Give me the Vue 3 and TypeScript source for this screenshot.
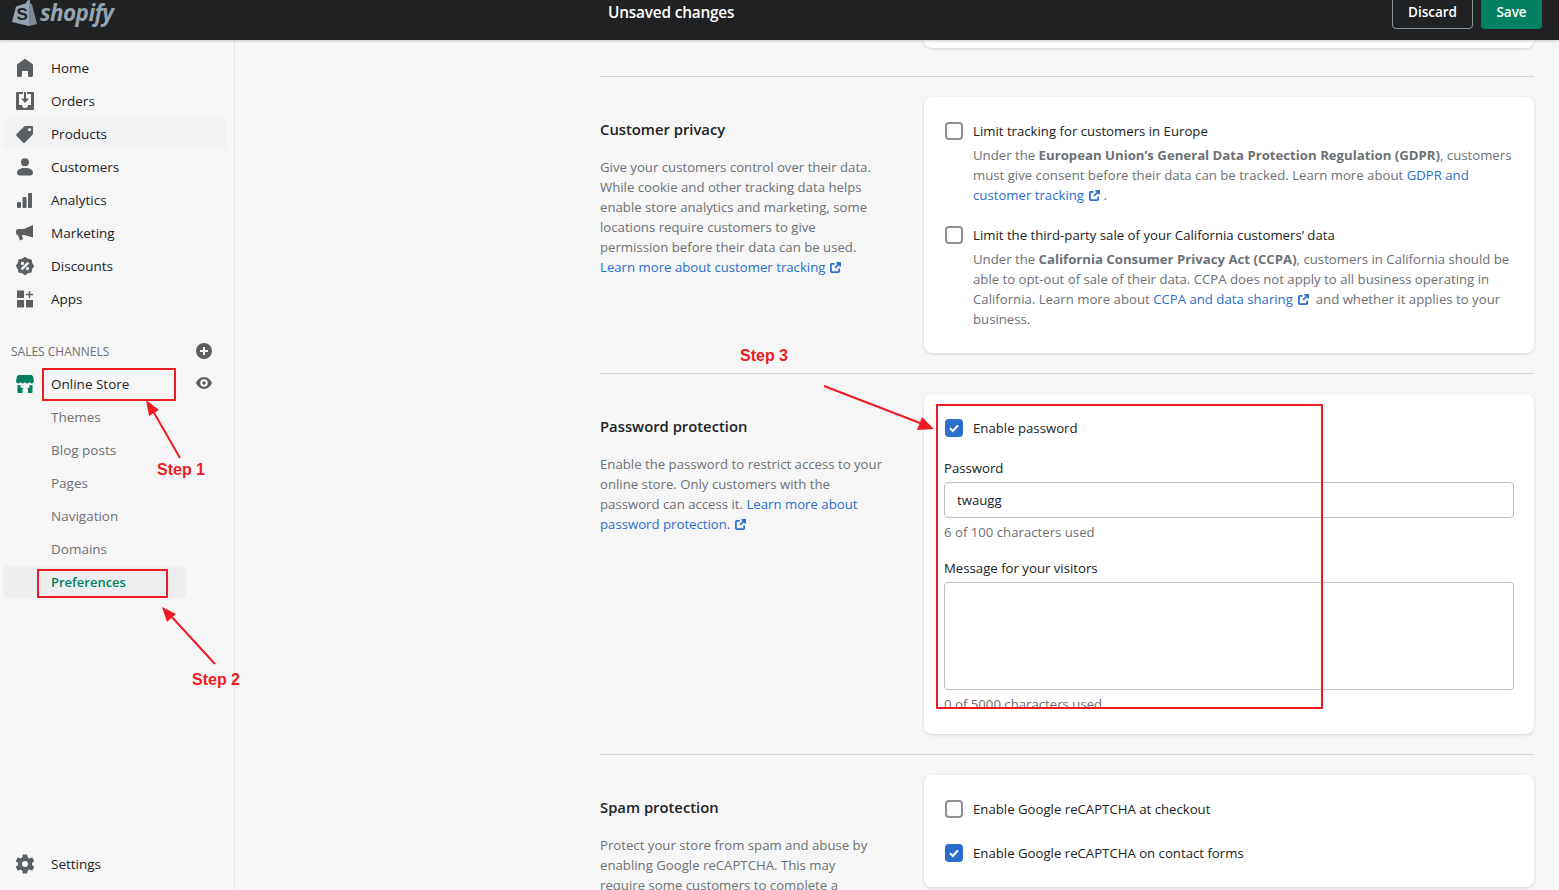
<template>
  <div class="page">
    <header class="topbar">
      <div class="logo">
        <svg class="bag" width="26" height="28" viewBox="0 0 26 28">
          <path d="M1 23 5 7.500 15 4.200C16 1.500 17.500.5 19 1L18 27Z" fill="#95a4b0" />
          <path d="M18.600 3.500 21 5.500 26 25 18 27Z" fill="#7c8b97" />
          <text x="5.500" y="21" class="bag-s">S</text>
        </svg>
        <span class="wordmark">shopify</span>
      </div>
      <span class="unsaved">Unsaved changes</span>
      <div class="actions">
        <button class="btn discard">Discard</button>
        <button class="btn save">Save</button>
      </div>
    </header>

    <div class="body">
      <aside class="sidebar">
        <a v-for="item in mainNav" :key="item.label" class="nav-item" :class="{ hovered: item.label === 'Products' }">
          <svg class="nav-icon" width="20" height="20" viewBox="0 0 20 20">
            <path :d="item.d" fill-rule="evenodd" />
          </svg>
          {{ item.label }}
        </a>

        <div class="channels">
          <span>SALES CHANNELS</span>
          <svg class="add" width="16" height="16" viewBox="0 0 16 16">
            <path d="M8 0a8 8 0 1 1 0 16A8 8 0 0 1 8 0ZM7 4v3H4v2h3v3h2V9h3V7H9V4Z" fill="#5c5f62" fill-rule="evenodd" />
          </svg>
        </div>

        <a class="nav-item store">
          <svg class="nav-icon" width="20" height="20" viewBox="0 0 20 20">
            <path d="M4 1h12a2 2 0 0 1 2 1.600L19 7a2.400 2.400 0 0 1-2.300 2.400A2.500 2.500 0 0 1 14.500 8 2.500 2.500 0 0 1 10 8 2.500 2.500 0 0 1 5.500 8 2.500 2.500 0 0 1 3.300 9.400 2.400 2.400 0 0 1 1 7l1-4.400A2 2 0 0 1 4 1ZM2.500 11c1.200.3 2.200.2 3-.2V13a1 1 0 0 0 1 1h7a1 1 0 0 0 1-1v-2.200c.8.400 1.800.5 3 .2v7a1 1 0 0 1-1 1h-3.500v-3.500a1.500 1.500 0 0 0-1.500-1.500H9a1.500 1.500 0 0 0-1.500 1.500V19H3.500a1 1 0 0 1-1-1Z" fill="#008060" />
          </svg>
          Online Store
          <svg class="eye" width="16" height="12" viewBox="0 0 16 12">
            <path d="M8 0c4 0 7 3.300 8 6-1 2.700-4 6-8 6S1 8.700 0 6c1-2.700 4-6 8-6Zm0 2.200a3.800 3.800 0 1 0 0 7.600 3.800 3.800 0 0 0 0-7.600ZM8 4.200a1.800 1.800 0 1 1 0 3.600 1.800 1.800 0 0 1 0-3.600Z" fill="#5c5f62" fill-rule="evenodd" />
          </svg>
        </a>
        <a v-for="sub in subNav" :key="sub" class="nav-item sub">{{ sub }}</a>
        <a class="nav-item sub selected">Preferences</a>

        <a class="nav-item settings">
          <svg class="nav-icon" width="20" height="20" viewBox="0 0 20 20">
            <path :d="gearPath" fill-rule="evenodd" />
          </svg>
          Settings
        </a>
      </aside>

      <main class="main">
        <div class="stub-card"></div>

        <section class="section">
          <div class="intro">
            <h2>Customer privacy</h2>
            <p>
              Give your customers control over their data.<br />
              While cookie and other tracking data helps<br />
              enable store analytics and marketing, some<br />
              locations require customers to give<br />
              permission before their data can be used.<br />
              <a class="link">Learn more about customer tracking<svg class="ext" width="11" height="11" viewBox="0 0 12 12"><path :d="extPath" /></svg></a>
            </p>
          </div>
          <div class="card">
            <div class="check-row">
              <span class="checkbox"></span>
              <span>Limit tracking for customers in Europe</span>
            </div>
            <p class="check-desc">
              Under the <b>European Union’s General Data Protection Regulation (GDPR)</b>, customers<br />
              must give consent before their data can be tracked. Learn more about <a class="link">GDPR and<br />customer tracking<svg class="ext" width="11" height="11" viewBox="0 0 12 12"><path :d="extPath" /></svg></a> .
            </p>
            <div class="check-row spaced">
              <span class="checkbox"></span>
              <span>Limit the third-party sale of your California customers’ data</span>
            </div>
            <p class="check-desc">
              Under the <b>California Consumer Privacy Act (CCPA)</b>, customers in California should be<br />
              able to opt-out of sale of their data. CCPA does not apply to all business operating in<br />
              California. Learn more about <a class="link">CCPA and data sharing<svg class="ext" width="11" height="11" viewBox="0 0 12 12"><path :d="extPath" /></svg></a>&nbsp; and whether it applies to your<br />
              business.
            </p>
          </div>
        </section>

        <section class="section">
          <div class="intro">
            <h2>Password protection</h2>
            <p>
              Enable the password to restrict access to your<br />
              online store. Only customers with the<br />
              password can access it. <a class="link">Learn more about<br />password protection.<svg class="ext" width="11" height="11" viewBox="0 0 12 12"><path :d="extPath" /></svg></a>
            </p>
          </div>
          <div class="card password-card">
            <div class="check-row">
              <span class="checkbox checked"><svg width="18" height="18" viewBox="0 0 18 18"><path d="M5 9.300 7.800 12 13 6.300" /></svg></span>
              <span>Enable password</span>
            </div>
            <label class="field-label first">Password</label>
            <input class="field" type="text" value="twaugg" readonly />
            <div class="help">6 of 100 characters used</div>
            <label class="field-label second">Message for your visitors</label>
            <textarea class="field area" readonly></textarea>
            <div class="help">0 of 5000 characters used</div>
          </div>
        </section>

        <section class="section">
          <div class="intro">
            <h2>Spam protection</h2>
            <p>
              Protect your store from spam and abuse by<br />
              enabling Google reCAPTCHA. This may<br />
              require some customers to complete a
            </p>
          </div>
          <div class="card">
            <div class="check-row">
              <span class="checkbox"></span>
              <span>Enable Google reCAPTCHA at checkout</span>
            </div>
            <div class="check-row wide">
              <span class="checkbox checked"><svg width="18" height="18" viewBox="0 0 18 18"><path d="M5 9.300 7.800 12 13 6.300" /></svg></span>
              <span>Enable Google reCAPTCHA on contact forms</span>
            </div>
          </div>
        </section>
      </main>
    </div>

    <svg class="annotations" width="1559" height="890" viewBox="0 0 1559 890">
      <g fill="none" stroke="#ed1c24" stroke-width="2">
        <rect x="43" y="369" width="132" height="31" />
        <rect x="38" y="570" width="129" height="27" />
        <rect x="937" y="405" width="385" height="303" />
        <path d="M180 458 153 411M215 664 170 615M824 386 920 423" />
      </g>
      <g fill="#ed1c24">
        <path d="M146 400 159 410 149 416Z" />
        <path d="M162 607 176 614 167 622Z" />
        <path d="M934 429 917 430 922 417Z" />
      </g>
      <g class="step">
        <text x="157" y="475">Step 1</text>
        <text x="192" y="685">Step 2</text>
        <text x="740" y="361">Step 3</text>
      </g>
    </svg>
  </div>
</template>

<script setup lang="ts">
interface NavItem {
  label: string
  d: string
}

// teeth and hub are worked out from the angle so the outline stays symmetrical
const polar = (r: number, deg: number, c = 10) => {
  const a = (deg * Math.PI) / 180
  return `${(c + r * Math.sin(a)).toFixed(2)} ${(c - r * Math.cos(a)).toFixed(2)}`
}

const ring = (r: number) =>
  `M${10 + r} 10a${r} ${r} 0 1 0-${r * 2} 0a${r} ${r} 0 1 0 ${r * 2} 0Z`

const gearOutline = () => {
  const pts: string[] = []
  for (let i = 0; i < 6; i++) {
    const base = i * 60
    pts.push(polar(7.2, base - 21), polar(9.8, base - 13), polar(9.8, base + 13), polar(7.2, base + 21))
  }
  return `M${pts.join('L')}Z`
}

const badgeOutline = () => {
  const pts: string[] = []
  for (let i = 0; i < 16; i++) {
    pts.push(polar(i % 2 ? 7.8 : 9.3, i * 22.5))
  }
  return `M${pts.join('L')}Z`
}

const gearPath = `${gearOutline()}${ring(3)}`

const extPath = 'M5 2H2a1 1 0 0 0-1 1v7a1 1 0 0 0 1 1h7a1 1 0 0 0 1-1V7M7 1h4v4M11 1 5.500 6.500'

const mainNav: NavItem[] = [
  {
    label: 'Home',
    d: 'M18 7.300V17.500c0 .8-.7 1.500-1.500 1.500h-2c-.8 0-1.500-.7-1.500-1.500V13H7v4.500C7 18.300 6.300 19 5.500 19h-2C2.700 19 2 18.300 2 17.500V7.300c0-.5.2-.9.600-1.200l6.600-4.900a1.500 1.500 0 0 1 1.600 0l6.600 4.900c.4.300.6.700.6 1.200Z',
  },
  {
    label: 'Orders',
    d: 'M2 1h6v2H4v11h3a3 3 0 0 0 6 0h3V3h-4V1h6a1 1 0 0 1 1 1v16a1 1 0 0 1-1 1H2a1 1 0 0 1-1-1V2a1 1 0 0 1 1-1ZM9 1h2v6.500h3L10 12 6 7.500h3Z',
  },
  {
    label: 'Products',
    d: 'M18 9.500V3a1 1 0 0 0-1-1h-6.500a2 2 0 0 0-1.400.6L1.600 10a1.500 1.500 0 0 0 0 2.100l6.300 6.300a1.500 1.500 0 0 0 2.100 0l7.400-7.500a2 2 0 0 0 .6-1.400ZM14.500 7.300a1.700 1.700 0 1 1 0-3.400 1.700 1.700 0 0 1 0 3.400Z',
  },
  {
    label: 'Customers',
    d: 'M10 1.300a4 4 0 1 1 0 8 4 4 0 0 1 0-8ZM10 11c-5 0-8 2-8 4.500 0 1.800 1.300 3 3 3h10c1.700 0 3-1.200 3-3C18 13 15 11 10 11Z',
  },
  {
    label: 'Analytics',
    d: 'M3 12h2a1 1 0 0 1 1 1v4a1 1 0 0 1-1 1H3a1 1 0 0 1-1-1v-4a1 1 0 0 1 1-1ZM8.500 7h2a1 1 0 0 1 1 1v9a1 1 0 0 1-1 1h-2a1 1 0 0 1-1-1V8a1 1 0 0 1 1-1ZM14 3h2a1 1 0 0 1 1 1v13a1 1 0 0 1-1 1h-2a1 1 0 0 1-1-1V4a1 1 0 0 1 1-1Z',
  },
  {
    label: 'Marketing',
    d: 'M18 2v12.500l-9-2.500H6.800l1.200 4.200-3 1.300L3 12a2 2 0 0 1-2-2V8a2 2 0 0 1 2-2h6Z',
  },
  {
    label: 'Discounts',
    d: `${badgeOutline()}M12.600 5.700l1.700 1.700-6.900 6.900-1.700-1.700ZM7.500 5.700a1.700 1.700 0 1 1 0 3.400 1.700 1.700 0 0 1 0-3.400ZM12.500 10.900a1.700 1.700 0 1 1 0 3.400 1.700 1.700 0 0 1 0-3.400Z`,
  },
  {
    label: 'Apps',
    d: 'M2 1.500h7v7.500H2ZM2 11h7v7.500H2ZM11 11h7v7.500h-7ZM13.800 2H15.200v2.800H18v1.400H15.200V9H13.800V6.200H11V4.800H13.800Z',
  },
]

const subNav: string[] = ['Themes', 'Blog posts', 'Pages', 'Navigation', 'Domains']
</script>

<style scoped>
.page {
  position: relative;
  display: flex;
  flex-direction: column;
  width: 1559px;
  height: 890px;
  overflow: hidden;
  background: #f6f6f7;
  color: #202223;
  font-family: 'Open Sans', 'Noto Sans', sans-serif;
  font-size: 13.5px;
  line-height: 20px;
}

.topbar {
  position: relative;
  z-index: 2;
  flex: none;
  display: flex;
  align-items: flex-end;
  height: 40px;
  padding: 0 17px 11px 11px;
  box-sizing: border-box;
  background: #202123;
  box-shadow: 0 1px 3px rgba(0, 0, 0, 0.2);
}

.logo {
  display: flex;
  align-items: center;
  gap: 3px;
  width: 597px;
  height: 28px;
  margin-bottom: 2px;
}

.bag {
  flex: none;
}

.bag-s {
  fill: #202123;
  font-family: 'Liberation Sans', sans-serif;
  font-size: 17px;
  font-weight: 700;
}

.wordmark {
  color: #95a4b0;
  font-size: 22.5px;
  line-height: 28px;
  font-style: italic;
  font-weight: 700;
  letter-spacing: -0.6px;
}

.unsaved {
  margin-bottom: 6px;
  color: #fff;
  font-size: 15.4px;
  font-weight: 600;
  letter-spacing: -0.2px;
}

.actions {
  display: flex;
  gap: 8px;
  margin-left: auto;
}

.btn {
  height: 36px;
  padding: 2px 0 0;
  border-radius: 4px;
  color: #fff;
  font: 600 13.5px 'Open Sans', sans-serif;
}

.discard {
  width: 81px;
  border: 1px solid #8c9196;
  background: transparent;
}

.save {
  width: 61px;
  border: none;
  background: #008060;
}

.body {
  flex: 1;
  display: flex;
  min-height: 0;
}

.sidebar {
  flex: none;
  display: flex;
  flex-direction: column;
  width: 235px;
  padding: 12px 0 9px;
  box-sizing: border-box;
  border-right: 1px solid #e1e3e5;
}

.nav-item {
  display: flex;
  align-items: center;
  gap: 16px;
  height: 33px;
  margin: 0 8px 0 3px;
  padding-left: 12px;
  flex: none;
  border-bottom: 1px solid transparent;
  box-sizing: border-box;
  background-clip: padding-box;
  border-radius: 4px;
}

.nav-icon {
  flex: none;
  fill: #5c5f62;
}

.hovered {
  background-color: #f1f2f3;
}

.channels {
  display: flex;
  align-items: center;
  justify-content: space-between;
  height: 33px;
  margin-top: 19px;
  padding: 0 22px 0 11px;
  color: #6d7175;
  font-size: 12px;
  flex: none;
}

.add {
  margin-bottom: 2px;
}

.store {
  margin-right: 0;
  padding-right: 22px;
}

.eye {
  margin: 0 0 2px auto;
}

.sub {
  padding-left: 48px;
  color: #6d7175;
}

.selected {
  margin-right: 48px;
  color: #008060;
  font-size: 13px;
  font-weight: 600;
  background-color: #edeef0;
}

.settings {
  margin-top: auto;
}

.main {
  flex: 1;
  min-width: 0;
  padding: 0 25px 0 365px;
  font-size: 13.2px;
}

.stub-card {
  width: 610px;
  height: 8px;
  margin: 0 0 28px 324px;
  border-radius: 0 0 8px 8px;
  background: #fff;
  box-shadow: 0 1px 3px rgba(63, 63, 68, 0.2);
}

.section {
  display: grid;
  grid-template-columns: 324px 610px;
  align-items: start;
  padding: 20px 0;
  border-top: 1px solid #d2d5d8;
}

.intro h2 {
  margin: 22px 0 18px;
  font-size: 14.8px;
  font-weight: 600;
  line-height: 20px;
}

.intro p {
  margin: 0;
  color: #6d7175;
}

.link {
  color: #2c6ecb;
}

.ext {
  margin-left: 5px;
  vertical-align: -1px;
  fill: none;
  stroke: #2c6ecb;
  stroke-width: 1.9;
}

.card {
  padding: 24px 20px;
  border-radius: 8px;
  background: #fff;
  box-shadow: 0 1px 3px rgba(63, 63, 68, 0.2);
}

.password-card {
  padding-bottom: 20px;
}

.check-row {
  display: flex;
  align-items: center;
  gap: 10px;
  height: 20px;
  margin-left: 1px;
}

.spaced {
  margin-top: 20px;
}

.wide {
  margin-top: 24px;
}

.checkbox {
  flex: none;
  width: 18px;
  height: 18px;
  box-sizing: border-box;
  border: 2px solid #8c9196;
  border-radius: 4px;
}

.checked {
  border: none;
  background: #2c6ecb;
}

.checked svg {
  display: block;
  fill: none;
  stroke: #fff;
  stroke-width: 2;
}

.check-desc {
  margin: 4px 0 0 29px;
  color: #6d7175;
  white-space: nowrap;
}

.check-desc b {
  font-weight: 700;
}

.field-label {
  display: block;
  margin-bottom: 4px;
}

.first {
  margin-top: 20px;
}

.second {
  margin-top: 16px;
}

.field {
  display: block;
  width: 100%;
  height: 36px;
  padding: 0 12px;
  box-sizing: border-box;
  border: 1px solid #babfc3;
  border-radius: 4px;
  outline: none;
  color: #202223;
  font: inherit;
  resize: none;
}

.area {
  height: 108px;
}

.help {
  margin-top: 4px;
  color: #6d7175;
}

.annotations {
  position: absolute;
  z-index: 3;
  inset: 0;
  pointer-events: none;
}

.step text {
  fill: #ed1c24;
  font-family: 'Liberation Sans', sans-serif;
  font-size: 16px;
  font-weight: 700;
}
</style>

<style>
html,
body {
  margin: 0;
  overflow: hidden;
}
</style>
